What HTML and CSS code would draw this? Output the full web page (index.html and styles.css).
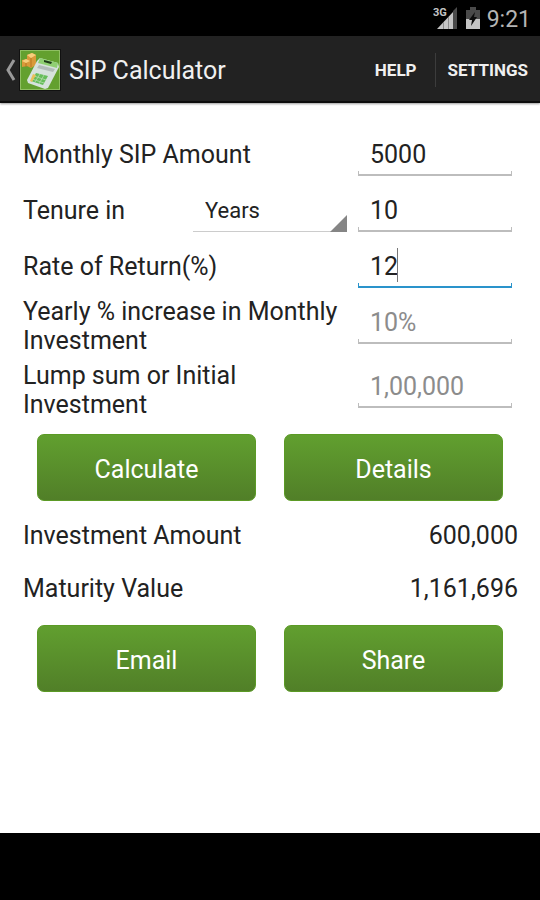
FILE: index.html
```html
<!doctype html>
<html lang="en">
<head>
    <meta charset="UTF-8">
    <meta name="viewport" content="width=device-width, initial-scale=1.0">
    <title>SIP Calculator</title>
    <link rel="stylesheet" href="styles.css">
</head>
<body>
<div class="status-bar">
    <svg class="status-signal" width="26" height="24" viewBox="0 0 26 24" aria-hidden="true">
        <path d="M20 5L24 1V23H20Z" fill="#4a4a4a"/>
        <path d="M4 23L20 6V23Z" fill="#c4c4c4"/>
        <path d="M10.500 16V23M15.500 11V23" stroke="#8a8a8a" stroke-width="1"/>
        <text class="signal-type" x="0" y="10">3G</text>
    </svg>
    <svg class="status-battery" width="16" height="24" viewBox="0 0 16 24" aria-hidden="true">
        <path d="M5 1H11V4H15V23H1V4H5Z" fill="#4a4a4a"/>
        <path d="M1 13H15V23H1Z" fill="#c4c4c4"/>
        <path d="M10 6L4 14H7L6 20L12 11H9Z" fill="#0c0c0c"/>
    </svg>
    <span class="status-clock">9:21</span>
</div>

<header class="action-bar">
    <a class="home-link" href="#">
        <svg width="10" height="22" viewBox="0 0 10 22" aria-hidden="true">
            <path d="M8 1L2 11L8 21" fill="none" stroke="#9a9a9a" stroke-width="3"/>
        </svg>
        <svg class="app-icon" width="42" height="42" viewBox="0 0 42 42" aria-hidden="true">
            <rect width="42" height="42" fill="#111111"/>
            <rect x="1" y="1" width="40" height="40" fill="#8fbf62"/>
            <rect x="2" y="2" width="38" height="38" fill="#63a02f"/>
            <!-- coins -->
            <path d="M8 6L13 4L17 6V11L17 16L12 19L8 17L3 18V11L8 10Z" fill="#d99a3a"/>
            <path d="M8 6L13 4L17 6L12 9ZM3 12L7 10L11 12L7 14Z" fill="#f6cf7c"/>
            <path d="M12 9V18M7 14V18" stroke="#b87420" stroke-width="1"/>
            <!-- calculator -->
            <path d="M18 12L21 9L39 14L40 18L29 39L26 40L9 34L8 31Z" fill="#d6e2dc"/>
            <path d="M21 9L39 14L38 19L19 14Z" fill="#8fcf72"/>
            <path d="M25 11L33 13L32 15L25 13Z" fill="#1d3a18"/>
            <path d="M20 16L36 20L34 23L18 19Z" fill="#b2bcb9"/>
            <path d="M17 24L29 27L24 36L12 32Z" fill="#65bd5a"/>
            <path d="M15 27L27 31M13 30L25 34M21 25L16 33M25 26L20 35" stroke="#a5d69c" stroke-width="1"/>
            <path d="M14 25L17 26L13 33L11 32Z" fill="#e9c05a"/>
        </svg>
        <h1 class="app-title">SIP Calculator</h1>
    </a>
    <nav class="menu">
        <a class="menu-item" href="#">HELP</a>
        <a class="menu-item" href="#">SETTINGS</a>
    </nav>
</header>

<main class="content">
    <form id="sipForm">
        <div class="row">
            <label class="wide" for="monthlyAmount">Monthly SIP Amount</label>
            <input type="text" id="monthlyAmount" inputmode="numeric" value="5000">
        </div>
        <div class="row">
            <label for="tenure">Tenure in</label>
            <select id="tenureUnit" aria-label="Tenure unit">
                <option value="years">Years</option>
                <option value="months">Months</option>
            </select>
            <input type="text" id="tenure" inputmode="numeric" value="10">
        </div>
        <div class="row">
            <label class="wide" for="rate">Rate of Return(%)</label>
            <div class="active-field">
                <input type="text" id="rate" inputmode="numeric" value="12">
                <span class="caret"></span>
            </div>
        </div>
        <div class="row tall">
            <label class="wide" for="yearlyIncrease">Yearly % increase in Monthly Investment</label>
            <input type="text" id="yearlyIncrease" inputmode="numeric" placeholder="10%">
        </div>
        <div class="row tall">
            <label class="wide" for="lumpSum">Lump sum or Initial Investment</label>
            <input type="text" id="lumpSum" inputmode="numeric" placeholder="1,00,000">
        </div>

        <div class="buttons">
            <button type="submit">Calculate</button>
            <button type="button">Details</button>
        </div>
    </form>

    <dl class="results">
        <div class="result">
            <dt>Investment Amount</dt>
            <dd id="investmentAmount">600,000</dd>
        </div>
        <div class="result">
            <dt>Maturity Value</dt>
            <dd id="maturityValue">1,161,696</dd>
        </div>
    </dl>

    <div class="buttons">
        <button type="button">Email</button>
        <button type="button">Share</button>
    </div>
</main>

<footer class="nav-bar"></footer>

<script>
    // monthly SIP, stepped up every year, plus an optional lump sum
    document.getElementById("sipForm").addEventListener("submit", function(event) {
        event.preventDefault();

        const read = id => Number(document.getElementById(id).value.replace(/[,%]/g, "")) || 0;
        const inYears = document.getElementById("tenureUnit").value === "years";
        const months = read("tenure") * (inYears ? 12 : 1);
        const monthlyRate = read("rate") / 1200;
        const step = 1 + read("yearlyIncrease") / 100;

        let amount = read("monthlyAmount");
        let invested = read("lumpSum");
        let value = invested;
        for (let month = 0; month < months; month++) {
            if (month > 0 && month % 12 === 0) {
                amount *= step;
            }
            invested += amount;
            value = (value + amount) * (1 + monthlyRate);
        }

        document.getElementById("investmentAmount").textContent = Math.round(invested).toLocaleString("en-US");
        document.getElementById("maturityValue").textContent = Math.round(value).toLocaleString("en-US");
    });
</script>
</body>
</html>
```

FILE: styles.css
```css
* {
    box-sizing: border-box;
}

body {
    display: flex;
    flex-direction: column;
    min-height: 100vh;
    margin: 0;
    font-family: Roboto, "Liberation Sans", sans-serif;
    font-size: 25px;
    line-height: 29px;
    color: #222222;
    background-color: #ffffff;
}

/* Status bar */
.status-bar {
    display: flex;
    justify-content: flex-end;
    align-items: center;
    gap: 6px;
    height: 36px;
    padding-right: 9px;
    background-color: #000000;
}

.status-clock {
    padding-top: 2px;
    font-size: 23px;
    color: #b4b4b4;
}

.signal-type {
    font-size: 11px;
    font-weight: bold;
    fill: #c4c4c4;
}

/* Action bar */
.action-bar {
    display: flex;
    justify-content: space-between;
    align-items: center;
    height: 67px;
    padding: 3px 12px 0 6px;
    background-color: #222222;
    border-bottom: 2px solid #0c0c0c;
    box-shadow: 0 1px 2px rgba(0, 0, 0, 0.4);
}

.home-link {
    display: flex;
    align-items: center;
    color: #f0f0f0;
    text-decoration: none;
}

.app-icon {
    margin: 0 8px 0 3px;
}

.app-title {
    margin: 0;
    font-size: 25px;
    font-weight: normal;
}

.menu {
    display: flex;
    align-items: center;
}

.menu-item {
    font-size: 17px;
    font-weight: bold;
    line-height: 34px;
    color: #f0f0f0;
    text-decoration: none;
}

.menu-item + .menu-item {
    margin-left: 18px;
    padding-left: 12px;
    border-left: 1px solid #3c3c3c;
}

/* Form */
.content {
    flex: 1;
    padding: 23px 0 28px;
}

.row {
    display: grid;
    grid-template-columns: 1fr 154px 154px;
    column-gap: 11px;
    align-items: start;
    min-height: 56px;
    padding: 6px 28px 0 23px;
}

.row label {
    align-self: center;
    padding-bottom: 6px;
}

.row .wide {
    grid-column: span 2;
}

/* two-line labels */
.row.tall {
    min-height: 64px;
    padding-top: 3px;
}

.row.tall label {
    align-self: start;
    padding-bottom: 3px;
}

.row.tall input {
    margin-top: 3px;
}

input,
select {
    width: 100%;
    height: 44px;
    padding: 0 12px;
    border: none;
    border-radius: 0;
    outline: none;
    font-family: inherit;
    color: #222222;
}

/* underline with a small tick at each end */
input {
    --line: #bdbdbd;
    font-size: 25px;
    background:
        linear-gradient(var(--line), var(--line)) left bottom / 1px 5px no-repeat,
        linear-gradient(var(--line), var(--line)) right bottom / 1px 5px no-repeat,
        linear-gradient(var(--line), var(--line)) left bottom / 100% 2px no-repeat;
}

input::placeholder {
    color: #8c8c8c;
    opacity: 1;
}

input:focus,
.active-field input {
    --line: #2a93cb;
}

.active-field {
    position: relative;
    height: 44px;
}

.caret {
    position: absolute;
    top: 4px;
    left: 39px;
    width: 1px;
    height: 34px;
    background-color: #777777;
}

select {
    appearance: none;
    font-size: 22px;
    background:
        linear-gradient(135deg, transparent 48%, #858585 52%) right bottom / 17px 17px no-repeat,
        linear-gradient(#cccccc, #cccccc) left bottom / 100% 1px no-repeat;
}

/* Buttons */
.buttons {
    display: grid;
    grid-template-columns: 1fr 1fr;
    gap: 28px;
    padding: 12px 37px 6px;
}

button {
    height: 67px;
    padding: 3px 6px 0;
    border: 1px solid #5b9a25;
    border-radius: 7px;
    font-family: inherit;
    font-size: 25px;
    color: #ffffff;
    background: linear-gradient(#619f2f, #517f28);
    cursor: pointer;
}

button:active {
    background: #517f28;
}

/* Results */
.results {
    margin: 0;
    padding: 0 22px 0 23px;
}

.result {
    display: flex;
    justify-content: space-between;
    align-items: center;
    height: 53px;
    padding-top: 3px;
}

.result dd {
    margin: 0;
}

.nav-bar {
    height: 67px;
    background-color: #000000;
}
```
